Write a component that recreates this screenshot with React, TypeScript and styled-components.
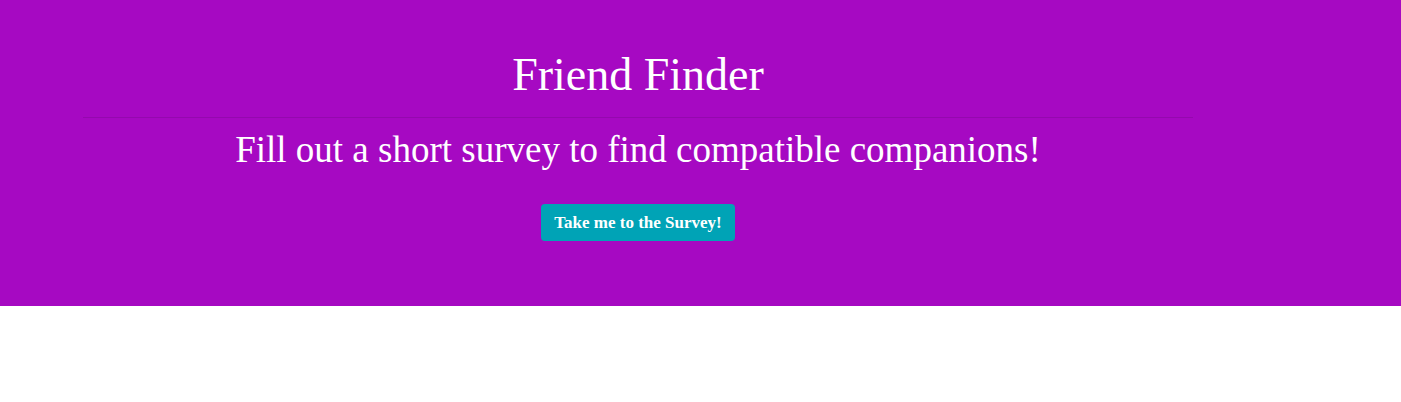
import React from 'react';
import styled, { createGlobalStyle } from 'styled-components';

const GlobalStyle = createGlobalStyle`
  body {
    margin: 0;
    background: #ffffff;
    font-family: "Liberation Serif", "Times New Roman", serif;
  }
`;

const Jumbotron = styled.header`
  background: #a609c2;
  padding: 47px 0 65px;
`;

const Container = styled.div`
  width: 1110px;
  margin-left: 83px;
  display: flex;
  flex-direction: column;
  align-items: center;
`;

const Title = styled.h1`
  margin: 0;
  font-size: 46px;
  line-height: 55px;
  font-weight: 400;
  color: #ffffff;
`;

const Divider = styled.hr`
  align-self: stretch;
  margin: 15px 0 10px;
  border: 0;
  border-top: 1px solid rgba(0, 0, 0, 0.1);
`;

const Lead = styled.p`
  margin: 0;
  font-size: 37px;
  line-height: 44px;
  color: #ffffff;
`;

const SurveyButton = styled.a`
  margin-top: 32px;
  display: inline-flex;
  align-items: center;
  justify-content: center;
  width: 194px;
  height: 37px;
  box-sizing: border-box;
  border-radius: 4px;
  background: #00a3b6;
  color: #ffffff;
  font-size: 17px;
  font-weight: 700;
  text-decoration: none;
  cursor: pointer;
`;

export default function App() {
  return (
    <>
      <GlobalStyle />
      <Jumbotron>
        <Container>
          <Title>Friend Finder</Title>
          <Divider />
          <Lead>Fill out a short survey to find compatible companions!</Lead>
          <SurveyButton href="#survey">Take me to the Survey!</SurveyButton>
        </Container>
      </Jumbotron>
    </>
  );
}
